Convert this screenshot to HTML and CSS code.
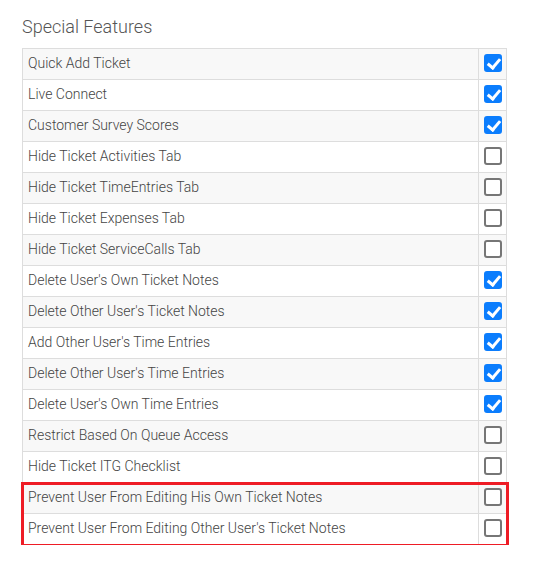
FILE: index.html
```html
<!DOCTYPE html>
<html lang="en">
<head>
    <meta charset="UTF-8">
    <title>Special Features</title>
    <link rel="stylesheet" href="styles.css">
</head>
<body>
    <div class="panel">
        <h3>Special Features</h3>
        <div class="table-wrap">
            <table class="features">
                <tr><td>Quick Add Ticket</td><td class="chk"><span class="box on"></span></td></tr>
                <tr><td>Live Connect</td><td class="chk"><span class="box on"></span></td></tr>
                <tr><td>Customer Survey Scores</td><td class="chk"><span class="box on"></span></td></tr>
                <tr><td>Hide Ticket Activities Tab</td><td class="chk"><span class="box"></span></td></tr>
                <tr><td>Hide Ticket TimeEntries Tab</td><td class="chk"><span class="box"></span></td></tr>
                <tr><td>Hide Ticket Expenses Tab</td><td class="chk"><span class="box"></span></td></tr>
                <tr><td>Hide Ticket ServiceCalls Tab</td><td class="chk"><span class="box"></span></td></tr>
                <tr><td>Delete User's Own Ticket Notes</td><td class="chk"><span class="box on"></span></td></tr>
                <tr><td>Delete Other User's Ticket Notes</td><td class="chk"><span class="box on"></span></td></tr>
                <tr><td>Add Other User's Time Entries</td><td class="chk"><span class="box on"></span></td></tr>
                <tr><td>Delete Other User's Time Entries</td><td class="chk"><span class="box on"></span></td></tr>
                <tr><td>Delete User's Own Time Entries</td><td class="chk"><span class="box on"></span></td></tr>
                <tr><td>Restrict Based On Queue Access</td><td class="chk"><span class="box"></span></td></tr>
                <tr><td>Hide Ticket ITG Checklist</td><td class="chk"><span class="box"></span></td></tr>
                <tr><td>Prevent User From Editing His Own Ticket Notes</td><td class="chk"><span class="box"></span></td></tr>
                <tr><td>Prevent User From Editing Other User's Ticket Notes</td><td class="chk"><span class="box"></span></td></tr>
            </table>
            <div class="highlight"></div>
        </div>
    </div>
</body>
</html>
```

FILE: styles.css
```css
* {
    box-sizing: border-box;
    margin: 0;
    padding: 0;
}

body {
    background: #fff;
    font-family: Roboto, 'Liberation Sans', sans-serif;
    color: #444;
}

.panel {
    padding: 16px 22px 0 22px;
    width: 507px;
}

h3 {
    font-size: 18px;
    font-weight: 300;
    color: #555;
    line-height: 22px;
    margin-bottom: 10px;
}

.table-wrap {
    position: relative;
    width: 485px;
}

.features {
    border-collapse: collapse;
    width: 485px;
    font-size: 14px;
    font-weight: 300;
}

.features td {
    border: 1px solid #ddd;
    height: 31px;
    padding: 0 5px 2px 5px;
    vertical-align: middle;
}

.features tr:nth-child(odd) td {
    background: #f8f8f8;
}

.features td.chk {
    width: 28px;
    padding: 0 0 2px 0;
    text-align: center;
}

.box {
    display: block;
    width: 18px;
    height: 18px;
    margin: 0 auto;
    border: 2px solid #767676;
    border-radius: 3px;
    background: #fff;
    position: relative;
}

.box.on {
    background: #0b7dfd;
    border-color: #0b7dfd;
}

.box.on::after {
    content: "";
    position: absolute;
    left: 4px;
    top: 0px;
    width: 5px;
    height: 10px;
    border-right: 3px solid #fff;
    border-bottom: 3px solid #fff;
    transform: rotate(40deg);
}

.highlight {
    position: absolute;
    left: -1px;
    top: 434px;
    width: 488px;
    height: 65px;
    border: 3px solid #ee1c25;
    pointer-events: none;
}
```
